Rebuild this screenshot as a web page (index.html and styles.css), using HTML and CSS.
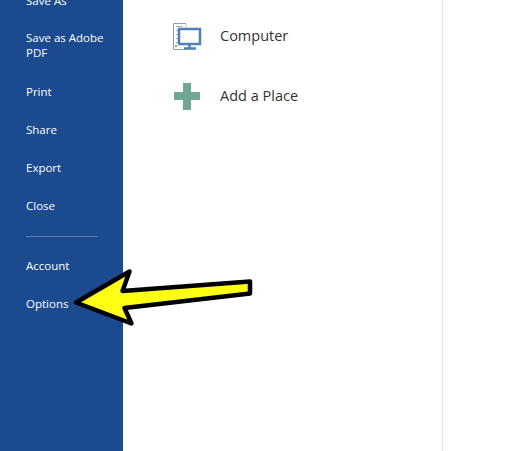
FILE: index.html
```html
<!DOCTYPE html>
<html lang="en">
<head>
  <meta charset="UTF-8">
  <title>Open</title>
  <link rel="stylesheet" href="styles.css">
</head>
<body>
  <div class="window">
    <nav class="sidebar">
      <div class="nav-item">Save As</div>
      <div class="nav-item nav-item-wrap">Save as Adobe PDF</div>
      <div class="nav-item">Print</div>
      <div class="nav-item">Share</div>
      <div class="nav-item">Export</div>
      <div class="nav-item">Close</div>
      <div class="nav-rule"></div>
      <div class="nav-item">Account</div>
      <div class="nav-item">Options</div>
    </nav>

    <main class="places">
      <div class="place">
        <svg class="place-icon" width="48" height="34" viewBox="0 0 48 34">
          <path d="M14 5.500H1.500V31.500H14" fill="none" stroke="#9a9a9a" stroke-width="1"/>
          <path d="M14 5.500V10" fill="none" stroke="#c4c4c4" stroke-width="1"/>
          <path d="M4 8.500h7M4 12.500h2M4 16.500h2M4 20.500h2M4 24.500h2" stroke="#a8a8a8" stroke-width="1"/>
          <rect x="3" y="27" width="2" height="2" fill="#b08a70"/>
          <rect x="7" y="11" width="21" height="15" fill="#fff" stroke="#4f7fb5" stroke-width="2.500"/>
          <path d="M17.500 27v3M12 30.500h12" stroke="#4f7fb5" stroke-width="2.500"/>
        </svg>
        <span>Computer</span>
      </div>
      <div class="place">
        <svg class="place-icon" width="48" height="30" viewBox="0 0 48 30">
          <path d="M11 3h8v9h9v8h-9v10h-8V20H2v-8h9z" fill="#70a598"/>
        </svg>
        <span>Add a Place</span>
      </div>
    </main>

    <div class="preview"></div>
  </div>

  <!-- callout arrow pointing at Options -->
  <svg class="arrow" width="515" height="451" viewBox="0 0 515 451">
    <path d="M76 302.500L129.500 271.500L122.500 291L250 281.500V293.500L124.500 308L131.500 323.500Z" fill="#ffff14" stroke="#000" stroke-width="4.500" stroke-linejoin="round"/>
  </svg>
</body>
</html>
```

FILE: styles.css
```css
body {
  margin: 0;
  font-family: 'Open Sans', sans-serif;
  background: #fff;
}

.window {
  display: flex;
  width: 515px;
  height: 451px;
  overflow: hidden;
}

/* Left blue file menu */
.sidebar {
  flex: none;
  width: 123px;
  height: 451px;
  box-sizing: border-box;
  padding: 0 8px 0 26px;
  background: #1c4a8e;
  color: #fff;
  font-size: 11.500px;
  line-height: 15px;
}

.nav-item {
  padding-bottom: 23px;
}

.nav-item:first-child {
  margin-top: -7px;
  padding-bottom: 22px;
}

.nav-item-wrap {
  padding-bottom: 24px;
}

.nav-rule {
  width: 71px;
  height: 1px;
  margin: 0 0 21px;
  background: #5a80b5;
}

/* Middle list of places */
.places {
  flex: none;
  box-sizing: border-box;
  width: 320px;
  height: 451px;
  padding: 18px 0 0 49px;
  border-right: 1px solid #e2e2e2;
  color: #333;
  font-size: 14.500px;
}

.place {
  display: flex;
  align-items: center;
  height: 34px;
  margin-bottom: 26px;
}

.place-icon {
  flex: none;
}

.preview {
  flex: 1;
}

.arrow {
  position: absolute;
  top: 0;
  left: 0;
}
```
